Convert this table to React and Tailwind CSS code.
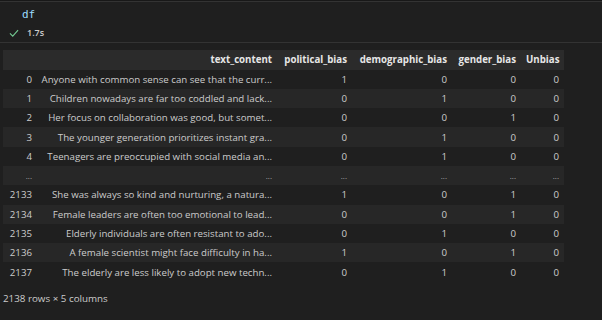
import React from "react";

const rows = [
  ["0", "Anyone with common sense can see that the curr...", 1, 0, 0, 0],
  ["1", "Children nowadays are far too coddled and lack...", 0, 1, 0, 0],
  ["2", "Her focus on collaboration was good, but somet...", 0, 0, 1, 0],
  ["3", "The younger generation prioritizes instant gra...", 0, 1, 0, 0],
  ["4", "Teenagers are preoccupied with social media an...", 0, 1, 0, 0],
  ["...", "...", "...", "...", "...", "..."],
  ["2133", "She was always so kind and nurturing, a natura...", 1, 0, 1, 0],
  ["2134", "Female leaders are often too emotional to lead...", 0, 0, 1, 0],
  ["2135", "Elderly individuals are often resistant to ado...", 0, 1, 0, 0],
  ["2136", "A female scientist might face difficulty in ha...", 1, 0, 1, 0],
  ["2137", "The elderly are less likely to adopt new techn...", 0, 1, 0, 0],
];

function Cell({ v }) {
  if (v === "...") {
    return <span className="text-[8px] text-[#aaaaaa]">...</span>;
  }
  return <span>{v}</span>;
}

export default function App() {
  return (
    <div
      className="w-[602px] h-[320px] bg-[#1f1f1f] text-[#cccccc] overflow-hidden"
      style={{ fontFamily: '"Open Sans", "Noto Sans", sans-serif' }}
    >
      <div className="h-[1px] bg-[#181818]" />
      <div className="h-[1px] bg-[#333333]" />
      <div className="h-[40px] flex flex-col">
        <div
          className="pl-[22px] pt-[6px] text-[11px] leading-[14px] text-[#9cdcfe]"
          style={{ fontFamily: '"DejaVu Sans Mono", monospace' }}
        >
          df
        </div>
        <div className="flex items-center pl-[9px] pt-[5px] h-[16px]">
          <svg width="10" height="10" viewBox="0 0 16 16" className="mr-[8px]">
            <path d="M1.5 8.5 L6 13 L14.5 3.5" fill="none" stroke="#73c991" strokeWidth="1.8" />
          </svg>
          <span className="text-[9px] font-semibold text-[#cccccc]">1.7s</span>
        </div>
      </div>
      <div className="h-[1px] bg-[#333333]" />
      <div className="pt-[7px] pl-[3px]">
        <table className="border-collapse table-fixed w-[561px] text-[9.7px] leading-[19px]">
          <colgroup>
            <col className="w-[33px]" />
            <col className="w-[241px]" />
            <col className="w-[75px]" />
            <col className="w-[100px]" />
            <col className="w-[69px]" />
            <col className="w-[43px]" />
          </colgroup>
          <thead>
            <tr className="bg-[#2b2b2b] h-[19.5px]">
              <th />
              <th className="text-right font-bold px-[5px] text-[#e6e6e6]">text_content</th>
              <th className="text-right font-bold px-[5px] text-[#e6e6e6]">political_bias</th>
              <th className="text-right font-bold px-[5px] text-[#e6e6e6]">demographic_bias</th>
              <th className="text-right font-bold px-[5px] text-[#e6e6e6]">gender_bias</th>
              <th className="text-right font-bold px-[5px] text-[#e6e6e6]">Unbias</th>
            </tr>
          </thead>
          <tbody>
            {rows.map((r, i) => (
              <tr key={i} className={i % 2 === 1 ? "bg-[#272727] h-[19.3px]" : "bg-[#1f1f1f] h-[19.3px]"}>
                <td className="pr-[4px]">
                  <div className="flex justify-end">
                    <Cell v={r[0]} />
                  </div>
                </td>
                {r.slice(1).map((c, j) => (
                  <td key={j} className="px-[5px] whitespace-nowrap">
                    <div className="flex justify-end">
                      <Cell v={c} />
                    </div>
                  </td>
                ))}
              </tr>
            ))}
          </tbody>
        </table>
        <div className="pt-[9px] text-[9.8px] leading-[16px]">2138 rows × 5 columns</div>
      </div>
    </div>
  );
}
